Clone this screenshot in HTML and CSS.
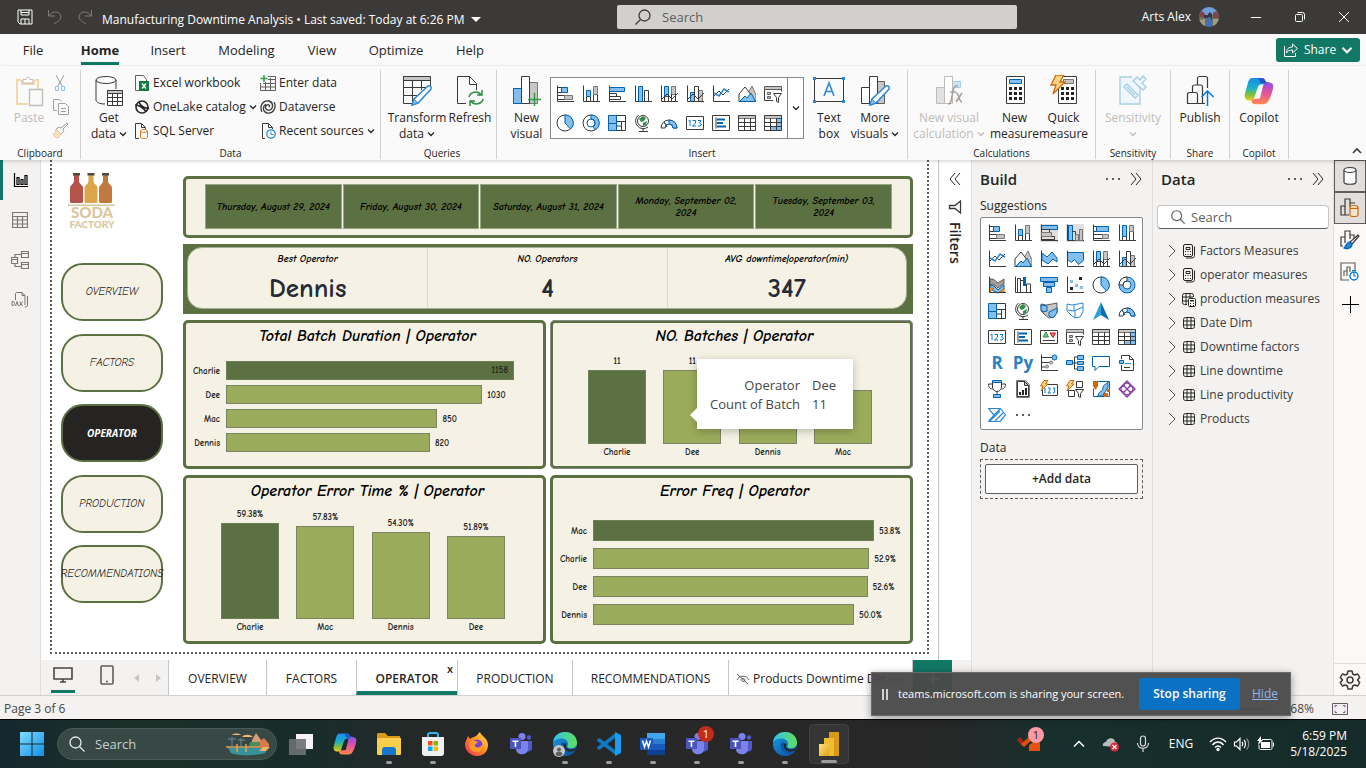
FILE: index.html
```html
<!DOCTYPE html>
<html lang="en">
<head>
<meta charset="utf-8">
<title>Manufacturing Downtime Analysis</title>
<link rel="stylesheet" href="styles.css">
</head>
<body>
<svg class="sprite" aria-hidden="true">
  <defs>
    <linearGradient id="cpA" x1="0" y1="0" x2="0" y2="1"><stop offset="0" stop-color="#1d8be8"/><stop offset=".45" stop-color="#18b2c9"/><stop offset=".7" stop-color="#6ac04a"/><stop offset="1" stop-color="#f4c51c"/></linearGradient>
    <linearGradient id="cpB" x1="0" y1="0" x2="0" y2="1"><stop offset="0" stop-color="#8a4fe8"/><stop offset=".5" stop-color="#e2519f"/><stop offset="1" stop-color="#ff8a4a"/></linearGradient>
    <linearGradient id="edgeA" x1="0" y1="0" x2="1" y2="0"><stop offset="0" stop-color="#35c1f1"/><stop offset="1" stop-color="#5fe05a"/></linearGradient>
    <linearGradient id="edgeB" x1="0" y1="0" x2="1" y2="1"><stop offset="0" stop-color="#1b9de2"/><stop offset="1" stop-color="#0c4a9e"/></linearGradient>
    <linearGradient id="fox" x1="1" y1="0" x2="0" y2="1"><stop offset="0" stop-color="#ffe34a"/><stop offset=".5" stop-color="#ff8a1e"/><stop offset="1" stop-color="#f0255f"/></linearGradient>
    <linearGradient id="win" x1="0" y1="0" x2="1" y2="1"><stop offset="0" stop-color="#7fdcff"/><stop offset="1" stop-color="#0f8fe8"/></linearGradient>
    <linearGradient id="gold" x1="0" y1="0" x2="1" y2="1"><stop offset="0" stop-color="#ffe27a"/><stop offset="1" stop-color="#e0a01a"/></linearGradient>
  </defs>
  <symbol id="v-stackbar" viewBox="0 0 18 18"><path class="k" d="M1.500 .5V16.500H18M1.500 2.500h4v5h-4M1.500 10.500h7v4h-7"/><path class="b" d="M5.500 2.500h6v5h-6z"/><path class="g" d="M8.500 10.500h8v4h-8z"/></symbol>
  <symbol id="v-stackcol" viewBox="0 0 18 18"><path class="k" d="M1.500 .5V16.500H18M4.500 16V11.500h4V16M11.500 16V9.500h4V16"/><path class="b" d="M4.500 5.500h4v6h-4z"/><path class="g" d="M11.500 1.500h4v8h-4z"/></symbol>
  <symbol id="v-bar" viewBox="0 0 18 18"><path class="k" d="M1.500 .5V16.500H18M1.500 8.500h7v3h-7M1.500 11.500h11v3h-11"/><path class="b" d="M1.500 2.500h15v4h-15z"/></symbol>
  <symbol id="v-col" viewBox="0 0 18 18"><path class="k" d="M1.500 .5V16.500H18M10.500 16V5.500h4V16"/><path class="b" d="M4.500 1.500h4v15h-4z"/></symbol>
  <symbol id="v-clbar" viewBox="0 0 18 18"><path class="b" d="M1.500 1.500h16v4h-16z"/><path class="k" d="M1.500 .5V16.500H18M1.500 5.500h8v3h-8M1.500 12.500h13v3h-13"/><path class="g" d="M1.500 8.500h10v4h-10z"/></symbol>
  <symbol id="v-clcol" viewBox="0 0 18 18"><path class="b" d="M2.500 1.500h4v15h-4z"/><path class="k" d="M1.500 .5V16.500H18M6.500 7.500h3V16"/><path class="g" d="M9.500 10.500h3v6h-3zM13.500 5.500h3v11h-3z"/></symbol>
  <symbol id="v-100bar" viewBox="0 0 18 18"><path class="k" d="M1.500 .5V16.500H18M1.500 2.500h3v5h-3M1.500 10.500h9v4h-9"/><path class="b" d="M4.500 2.500h12v5h-12z"/><path class="g" d="M10.500 10.500h6v4h-6z"/></symbol>
  <symbol id="v-100col" viewBox="0 0 18 18"><path class="k" d="M1.500 .5V16.500H18M4.500 16V12.500h4V16M11.500 16V7.500h4V16"/><path class="b" d="M4.500 1.500h4v11h-4z"/><path class="g" d="M11.500 1.500h4v6h-4z"/></symbol>
  <symbol id="v-line" viewBox="0 0 18 18"><path class="k" d="M1.500 .5V16.500H18M2 11l5-5 4 4 6-6"/><path d="M2 8l5 3 5-7 5 3" fill="none" stroke="#2b88d8" stroke-width="1.500"/></symbol>
  <symbol id="v-area" viewBox="0 0 18 18"><path class="g" d="M10 8l4-7 4 9v7z"/><path class="k" fill="#fff" d="M1 16V9l6-7 7 9M.5 16.500H18"/><path class="b" d="M1.500 16.500L7 11l2 2 4-5 4.500 8.500z"/></symbol>
  <symbol id="v-starea" viewBox="0 0 18 18"><path class="b" d="M2 3l5 4 5-5 5 6v4l-4-3-5 5-6-4z"/><path class="k" d="M1.500 .5V16.500H18"/></symbol>
  <symbol id="v-fullarea" viewBox="0 0 18 18"><path class="b" d="M1.500 2.500h16v8l-5 4-4-5-3 3-4-3z"/><path class="k" d="M1.500 .5V16.500H18"/></symbol>
  <symbol id="v-combo" viewBox="0 0 18 18"><path class="b" d="M4.500 1.500h4v10h-4z"/><path class="g" d="M11.500 1.500h4v8h-4z"/><path class="k" d="M1.500 .5V16.500H18M4.500 16v-5M8.500 16v-5M11.500 16V9M15.500 16V9M2 14l5-5 5 5 6-6"/></symbol>
  <symbol id="v-combo2" viewBox="0 0 18 18"><path class="b" d="M4.500 7.500h4v9h-4z"/><path class="g" d="M12.500 5.500h4v11h-4z"/><path class="k" d="M1.500 .5V16.500H18M8.500 16V1.500h4V16M2 14l5-5 5 5 6-6"/></symbol>
  <symbol id="v-ribbon" viewBox="0 0 18 18"><path d="M2 3h3l5 4 6-4v5l-6 4-5-4-3 1z" fill="#a19f9d" stroke="#605e5c"/><path d="M2 9l4 1 4 4 6-5v4l-6 4-8-4z" fill="#83beec" stroke="#0063b1"/><path d="M2 12h4l-4 4M16 12l-4 4h4z" fill="#f2a33a" stroke="#d26900"/><path class="k" d="M1.500 .5V16.500H18"/></symbol>
  <symbol id="v-waterfall" viewBox="0 0 18 18"><path class="k" d="M1.500 .5V16.500H18M3.500 16V2.500h3V16M6.500 4.500h3v5M12.500 16v-8h4v8"/><path d="M10.500 1v9" stroke="#0063b1" stroke-width="3"/></symbol>
  <symbol id="v-funnel" viewBox="0 0 18 18"><path class="b" d="M.5 1.500h17v4H.5zM3.500 6.500h11v4h-11zM6.500 11.500h5v5h-5z"/></symbol>
  <symbol id="v-scatter" viewBox="0 0 18 18"><path class="k" d="M1.500 .5V16.500H18"/><path fill="#83beec" d="M4 4h3v3H4zM9 8h3v3H9zM14 10h3v3h-3z"/><path fill="#252423" d="M13 1h3v3h-3zM4 11h3v3H4z"/></symbol>
  <symbol id="v-pie" viewBox="0 0 18 18"><circle class="k" cx="9" cy="9" r="8"/><path class="b" d="M9 1v8l5.500 6A8 8 0 0 0 9 1z"/></symbol>
  <symbol id="v-donut" viewBox="0 0 18 18"><circle class="k" cx="9" cy="9" r="8"/><path class="b" d="M9 1v4a4 4 0 0 1 2 7.500l2 3.500A8 8 0 0 0 9 1z"/><circle cx="9" cy="9" r="4" fill="none" stroke="#0063b1"/></symbol>
  <symbol id="v-donut2" viewBox="0 0 18 18"><circle class="b" cx="9" cy="9" r="8"/><circle cx="9" cy="9" r="4" fill="#fff" stroke="#0063b1"/><path class="k" fill="#fff" d="M9 1A8 8 0 0 0 1 9h4a4 4 0 0 1 4-4z"/></symbol>
  <symbol id="v-tree" viewBox="0 0 18 18"><path class="k" d="M8.500 1.500h9v15h-9zM8.500 7.500h9M13.500 7.500v9M8.500 12h5"/><path class="b" d="M.5 1.500h8v8h-8zM.5 9.500h8v7h-8z"/></symbol>
  <symbol id="v-globe" viewBox="0 0 18 18"><circle class="k" cx="9" cy="7" r="5.500"/><path d="M5 5l4-3 3 2-2 3-3 1zM9 9l4-2-1 4-3 1z" fill="#2f8f46"/><path class="k" d="M4.500 1A7.500 7.500 0 1 0 14 13M9 14v3M5 17.500h9"/></symbol>
  <symbol id="v-map" viewBox="0 0 18 18"><path d="M1 2l5 1 6-1 5-1v9l-3 5-5 1-4-3-4-4z" fill="#c8c6c4" stroke="#605e5c"/><path class="b" d="M1 3l6 1v5l-4 1-2-3zM9 10l8-4v5l-4 5-4-2z"/></symbol>
  <symbol id="v-shape" viewBox="0 0 18 18"><path fill="#fff" stroke="#2b88d8" d="M1 2l5 1 6-1 5-1v9l-3 5-5 1-4-3-4-4zM2 8l6 1 9-4M9 9v7M8 3v6"/></symbol>
  <symbol id="v-arrow" viewBox="0 0 18 18"><path fill="#2aa2d8" d="M9 0L1 18l8-5z"/><path fill="#0e6cb0" d="M9 0l8 18-8-5z"/></symbol>
  <symbol id="v-gauge" viewBox="0 0 18 18"><path class="k" fill="#fff" d="M1 14a8 8 0 0 1 8-8 8 8 0 0 1 8 8h-4a4 4 0 0 0-8 0z"/><path class="b" d="M9 6a8 8 0 0 1 8 8h-4a4 4 0 0 0-4-4zM7 13l-3-5z"/></symbol>
  <symbol id="v-card" viewBox="0 0 18 18"><path class="k" fill="#fff" d="M.5 2.500h17v13H.5z"/><path fill="none" stroke="#0078d4" d="M2.500 7L4 6v6M6.500 6.500h3V9l-3 3h3.500M12 6.500h3l-1.500 2.500 2 1.500L14 12h-2"/></symbol>
  <symbol id="v-multirow" viewBox="0 0 18 18"><path class="k" fill="#fff" d="M.5 1.500h17v15H.5zM4 3.500v11"/><path stroke="#0063b1" stroke-width="2" d="M5 5.500h8M5 9h6M5 12.500h9"/></symbol>
  <symbol id="v-kpi" viewBox="0 0 18 18"><path class="k" fill="#fff" d="M.5 2.500h17v13H.5z"/><path fill="#7bc58c" stroke="#2f8f46" d="M3 9l3-5 2.500 5z"/><path fill="#e87474" stroke="#c50f1f" d="M10 5h5.500L13 9.500z"/><path class="k" d="M3 12.500h12"/></symbol>
  <symbol id="v-slicer" viewBox="0 0 18 18"><path class="k" d="M9 15.500H.5v-13h17v4"/><path fill="#c8c6c4" stroke="#605e5c" d="M.5 1.500h17v3H.5zM3.500 7.500h3v2h-3zM3.500 11.500h3v2h-3z"/><path class="k" fill="#fff" d="M9.500 8.500h8l-3 4v5l-2-1v-4z"/></symbol>
  <symbol id="v-table" viewBox="0 0 18 18"><path class="g" d="M.5 1.500h17v3H.5z"/><path class="k" d="M.5 1.500h17v15H.5zM.5 8.500h17M.5 12.500h17M6.500 4v12M12.500 4v12"/></symbol>
  <symbol id="v-matrix" viewBox="0 0 18 18"><path class="g" d="M.5 1.500h17v3H.5z"/><path class="b" d="M12.500 4.500h5v12h-11v-4h6z"/><path class="k" d="M.5 1.500h17v15H.5zM.5 8.500h17M.5 12.500h17M6.500 4v12M12.500 4v12"/></symbol>
  <symbol id="v-influ" viewBox="0 0 18 18"><path class="k" d="M1.500 .5V16.500H18M1.500 3.500H13M1.500 8.500h8M1.500 13h4"/><circle class="b" cx="14.500" cy="3.500" r="2.500"/><circle class="g" cx="11" cy="8.500" r="1.500"/><circle class="g" cx="7" cy="12.500" r="1.500"/></symbol>
  <symbol id="v-decomp" viewBox="0 0 18 18"><path class="k" d="M6 9h5M8.500 3v12M8.500 3h3M8.500 15h3"/><path class="b" d="M.5 6.500h6v4h-6zM11.500 1.500h6v4h-6zM11.500 7.500h6v3h-6zM11.500 12.500h6v4h-6z"/></symbol>
  <symbol id="v-qa" viewBox="0 0 18 18"><path fill="#fff" stroke="#0063b1" d="M.5 2.500h17v10H7l-4 4v-4H.5z"/></symbol>
  <symbol id="v-paper" viewBox="0 0 18 18"><path class="k" d="M3.500 5V1.500h8l4 4v11h-12V11M11.500 1.500v4h4M6 13.500h6"/><path class="b" d="M1.500 6.500h4v3h-4z"/><path stroke="#2b88d8" d="M7 9.500h6"/></symbol>
  <symbol id="v-goal" viewBox="0 0 18 18"><path class="k" d="M4.500 2v5a4.500 4.500 0 0 0 9 0V2M4 4H.5c0 4 2 5 4 5M14 4h3.500c0 4-2 5-4 5M9 11.500V15"/><path class="b" d="M4.500 .5h9v2h-9zM5.500 14.500h7v3h-7z"/></symbol>
  <symbol id="v-paged" viewBox="0 0 18 18"><path class="g" d="M2.500 .5h9l4 4v13h-13z"/><path class="k" fill="#fff" d="M3.500 1.500h7l4 4v11h-11zM10.500 1.500v4h4"/><path stroke="#252423" stroke-width="2" d="M6 15v-3M9 15v-5M12 15V8"/></symbol>
  <symbol id="v-cardnew" viewBox="0 0 18 18"><path class="k" fill="#fff" d="M2.500 4.500h15v11h-15z"/><path fill="none" stroke="#0078d4" d="M5 8v5M8 8h2v2l-2 3h3M13 8h2l-1 2 1 1-1 2h-1"/><path fill="#fbd38a" stroke="#d26900" d="M4 .5h4L5.500 4H8l-7 7 2-5H.5z"/></symbol>
  <symbol id="v-slicernew" viewBox="0 0 18 18"><path class="k" d="M10.500 1.500h6v6h-6zM2.500 10.500h6v6h-6z"/><path class="k" fill="#fff" d="M9.500 9.500h8l-3 4v4l-2-1v-3z"/><path fill="#fbd38a" stroke="#d26900" d="M4 .5h4L5.500 4H8l-7 7 2-5H.5z"/></symbol>
  <symbol id="v-azure" viewBox="0 0 18 18"><path class="b" fill="#fff" d="M3.500 1.500h14v15h-16v-8"/><path fill="#83beec" stroke="#0063b1" d="M6 16c0-5 5-4 5-8s3-3 5-6v6c-3 1-1 4-4 5l-1 3z"/><path fill="#d26900" d="M1 1h5v5L3.500 10 1 6zM12 13h4v4h-4zM15 9h3v3h-3z"/></symbol>
  <symbol id="v-apps" viewBox="0 0 18 18"><g fill="#fff" stroke="#8b3fa8" stroke-width="1.300"><path d="M9 1l8 8-8 8-8-8z"/><path d="M9 9L6 6a2.500 2.500 0 0 1 6 0zM9 9l3 3a2.500 2.500 0 0 1-6 0zM9 9l-3 3a2.500 2.500 0 0 1 0-6zM9 9l3-3a2.500 2.500 0 0 1 0 6z"/></g></symbol>
  <symbol id="v-flow" viewBox="0 0 18 18"><path fill="#fff" stroke="#2b88d8" stroke-width="1.200" d="M.5 2.500h12L17.500 9 12 15.500H.5L6 9zM6 9l6-6M2 15L12 5M7 15l8-8"/></symbol>
  <symbol id="v-dots" viewBox="0 0 18 18"><path fill="#605e5c" d="M2 8h2v2H2zM8 8h2v2H8zM14 8h2v2h-2z"/></symbol>
  <symbol id="i-down" viewBox="0 0 8 8"><path fill="none" stroke="currentColor" stroke-width="1.300" d="M1 2.500l3 3 3-3"/></symbol>
  <symbol id="i-right2" viewBox="0 0 14 14"><path fill="none" stroke="currentColor" d="M2 1l5 6-5 6M7 1l5 6-5 6"/></symbol>
  <symbol id="i-right" viewBox="0 0 14 14"><path fill="none" stroke="currentColor" d="M4 1l6 6-6 6"/></symbol>
  <symbol id="i-search" viewBox="0 0 18 18"><circle cx="10.500" cy="7.500" r="5.500" fill="none" stroke="currentColor" stroke-width="1.300"/><path stroke="currentColor" stroke-width="1.300" d="M6.500 11.500L1.500 16.500"/></symbol>
  <symbol id="i-search-r" viewBox="0 0 18 18"><circle cx="7.500" cy="7.500" r="5.500" fill="none" stroke="currentColor" stroke-width="1.300"/><path stroke="currentColor" stroke-width="1.300" d="M11.500 11.500l5 5"/></symbol>
  <symbol id="i-calc" viewBox="0 0 14 16"><rect x="1.500" y="1.500" width="9" height="12" rx="1.500" fill="none" stroke="#252423"/><path fill="none" stroke="#252423" d="M12.500 3.500v9c0 1.500-1 2.500-2.500 2.500H4M4 4.500h4v2H4z"/><path fill="#252423" d="M3 8h1v1H3zM5.500 8h1v1h-1zM8 8h1v1H8zM3 11h1v1H3zM5.500 11h1v1h-1zM8 11h1v1H8z"/></symbol>
  <symbol id="i-tbl" viewBox="0 0 14 16"><rect x="1.500" y="2.500" width="11" height="11" rx="2" fill="none" stroke="#252423"/><path stroke="#252423" d="M1 6h12M1 10h12M5 3v11M9 3v11"/></symbol>
  <symbol id="i-tblcalc" viewBox="0 0 16 16"><path fill="none" stroke="#252423" d="M6 13.500H3.500a2 2 0 0 1-2-2v-7a2 2 0 0 1 2-2h7a2 2 0 0 1 2 2V6M1 6h11M1 10h6M5 3v10M9 3v4"/><rect x="7.500" y="7.500" width="7" height="8" rx="1" fill="#fff" stroke="#252423"/><path fill="#252423" d="M9 9h4v1.500H9zM9 12h1v1H9zM12 12h1v1h-1zM9 14h1v1H9zM12 14h1v1h-1z"/></symbol>
  <symbol id="i-copilot" viewBox="0 0 32 32"><path fill="url(#cpB)" d="M23 6c3 0 5 1 7 2 2 2 1 5 0 9l-2 6c-2 4-3 7-8 7h-8c-3 0-4-2-4-5l9-1 3-12c1-4 1-6 3-6z"/><path fill="url(#cpA)" d="M9 2h9c3 0 4 2 5 6l-5 1c-2 0-3 2-4 5l-3 9c0 2-2 3-4 3H4c-3-1-4-4-3-7L4 8c1-4 2-6 5-6z"/><path fill="#2458c8" d="M14 2h5c3 0 4 2 5 6h-5c-3-1-2-5-5-6z"/></symbol>
  <symbol id="i-teams" viewBox="0 0 24 24"><circle cx="13" cy="4.500" r="3.500" fill="#7b83eb"/><circle cx="20" cy="5.500" r="2.200" fill="#5059c9"/><path fill="#5059c9" d="M15 9h8v7c0 3-3 4-6 3z"/><path fill="#7b83eb" d="M7 9h12v8c0 7-12 7-12 0z"/><path fill="#4b53bc" d="M1 6h11v11H1z"/><path fill="#fff" d="M3.500 8.500h6V10H7.300v5H5.700v-5H3.500z"/></symbol>
  <symbol id="i-edge" viewBox="0 0 24 24"><circle cx="12" cy="12" r="12" fill="url(#edgeB)"/><path fill="url(#edgeA)" d="M0 10C2-4 24-3 24 11c0 4-4 6-8 5-3-1-1-2-1-4 0-7-12-7-15-2z"/><path fill="#0c59a4" d="M9 10c-3 4 0 12 8 12 2 0 4-1 5-3-4 2-9 1-11-2-1-2-1-4-.5-6z"/><path fill="#242626" d="M10.500 11c2 0 3 1 2.500 3-.5 1.500 2 4 6 3.500l4-1-1 2c-6 3-12 0-11.500-7.500z"/></symbol>
</svg>

<header class="titlebar">
  <div class="quick">
    <button aria-label="Save"><svg width="16" height="16" viewBox="0 0 16 16" fill="none" stroke="#fff"><path d="M1 1h14v14H3l-2-2zM4 1v5h8V1M4 15v-5h8v5M8 10v5M4 3.500h8"/></svg></button>
    <button aria-label="Undo"><svg width="16" height="16" viewBox="0 0 16 16" fill="none" stroke="#7d7b79"><path d="M1.500 1v6H8M2 7c3-6 12-5 12 1 0 3-4 5-7 7"/></svg></button>
    <button aria-label="Redo"><svg width="16" height="16" viewBox="0 0 16 16" fill="none" stroke="#7d7b79"><path d="M14.500 1v6H8M14 7C11 1 2 2 2 8c0 3 4 5 7 7"/></svg></button>
  </div>
  <button class="doc">Manufacturing Downtime Analysis • Last saved: Today at 6:26 PM <i class="caret"></i></button>
  <label class="topsearch"><svg width="18" height="18"><use href="#i-search"/></svg><input type="text" placeholder="Search" aria-label="Search"></label>
  <div class="account"><span>Arts Alex</span>
    <svg class="avatar" width="20" height="20" viewBox="0 0 20 20"><clipPath id="av"><circle cx="10" cy="10" r="10"/></clipPath><g clip-path="url(#av)"><path fill="#6f9ddc" d="M0 0h20v8H0z"/><path fill="#6d7058" d="M0 8h20v12H0z"/><path fill="#84424a" d="M0 6l3-2 3 3v3H0zM14 6l3-2 3 2v5h-6z"/><path fill="#343a42" d="M5 8h4v3H5zM9 7l2-2 2 2v6H9z"/><path fill="#3f6fc0" d="M8 11l3-1 2 3v7H7z"/><path fill="#9d9c85" d="M0 13l6-1v8H0zM14 12h6v8h-6z"/></g></svg>
    <button aria-label="Minimize"><svg width="12" height="12" viewBox="0 0 12 12" stroke="#fff"><path d="M1 6.500h10"/></svg></button>
    <button aria-label="Restore"><svg width="12" height="12" viewBox="0 0 12 12" stroke="#fff" fill="none"><rect x="1.500" y="3.500" width="7" height="7" rx="1"/><path d="M3.500 1.500h5a2 2 0 0 1 2 2v5"/></svg></button>
    <button aria-label="Close"><svg width="12" height="12" viewBox="0 0 12 12" stroke="#fff"><path d="M1 1l10 10M11 1L1 11"/></svg></button>
  </div>
</header>

<nav class="menu">
  <button>File</button><button class="on">Home</button><button>Insert</button><button>Modeling</button><button>View</button><button>Optimize</button><button>Help</button>
  <button class="share"><svg width="16" height="16" viewBox="0 0 16 16" fill="none" stroke="#fff"><path d="M1.500 4v10.500h11V11M3.500 11c0-4 2-6 6-6V2l5 4.500-5 4.500V8c-3 0-5 1-6 3z"/></svg>Share<svg width="12" height="12"><use href="#i-down"/></svg></button>
</nav>

<section class="ribbon" aria-label="Home ribbon">
  <div class="group clip"><div class="tools">
    <button class="big off"><svg width="30" height="32" viewBox="0 0 30 32" fill="none"><path stroke="#f3d7a8" stroke-width="2" d="M7 5H3v24h11M21 5h3v9M8 5v4h12V5"/><path stroke="#bebbb8" d="M9 8V4.500h3c0-3 4-3 4 0h3V8z" fill="#fff"/><path stroke="#bebbb8" stroke-width="1.300" d="M15.500 14.500h13v16h-13z" fill="#fafafa"/></svg><span>Paste</span></button>
    <div class="stack tiny">
      <button aria-label="Cut"><svg width="16" height="16" viewBox="0 0 16 16" fill="none" stroke="#a3a09e"><path d="M4 0l6 11M12 0L6 11"/><g stroke="#8fc1df"><path d="M3.500 11.500h3v4h-3zM9.500 11.500h3v4h-3z"/></g></svg></button>
      <button aria-label="Copy"><svg width="18" height="16" viewBox="0 0 18 16" fill="none" stroke="#a3a09e"><path d="M5 11.500H1.500V.5h6l2 2M6.500 4.500h7l3 3v8h-10zM9 9.500h5M9 12.500h5"/></svg></button>
      <button aria-label="Format painter"><svg width="18" height="16" viewBox="0 0 18 16" fill="none"><path stroke="#a3a09e" fill="#fafafa" d="M16 1l-5 5 1 2-3 3-5-5 3-2 2 1 6-5z"/><path fill="#fbe3c0" stroke="#efbf8a" d="M4 6l5 5-3 4c-2 0-4-2-5-4 2 0 3-2 3-5z"/></svg></button>
    </div></div><h2>Clipboard</h2></div>
  <div class="group data"><div class="tools">
    <button class="big"><svg width="30" height="32" viewBox="0 0 30 32" fill="none" stroke="#3b3a39"><ellipse cx="12" cy="5" rx="10" ry="3.500" fill="#fff"/><path d="M2 5v20c0 2 3 4 9 4M22 5v9"/><path fill="#fff" d="M13.500 15.500h15v15h-15z"/><path fill="#c8c6c4" d="M13.500 15.500h15v3h-15z"/><path d="M13.500 22.500h15M13.500 26.500h15M18.500 18v12M23.500 18v12"/></svg><span>Get<br>data <svg class="dn"><use href="#i-down"/></svg></span></button>
    <div class="stack">
      <button><svg width="16" height="16" viewBox="0 0 16 16" fill="none" stroke="#605e5c"><path d="M5 15.500H1.500V.5h8l3 4V7"/><path fill="#107c41" stroke="none" d="M5 6h10v10H5z"/><path stroke="#fff" stroke-width="1.400" d="M8 8.500l4 5M12 8.500l-4 5"/></svg>Excel workbook</button>
      <button><svg width="16" height="16" viewBox="0 0 16 16" fill="none" stroke="#252423" stroke-width="1.600"><circle cx="8" cy="8" r="6"/><path d="M1 6c4 0 9 3 11 7M5 3c1 3 5 7 10 6"/></svg>OneLake catalog<svg class="dn"><use href="#i-down"/></svg></button>
      <button><svg width="16" height="16" viewBox="0 0 16 16" fill="none" stroke="#3b3a39"><path d="M5 15.500H1.500V.5h6l4 4V6M7.500 .5v4h4"/><path fill="#fff" stroke="#e07a1f" d="M6.500 8v6c0 2 7 2 7 0V8c0-2-7-2-7 0s7 2 7 0"/></svg>SQL Server</button>
    </div>
    <div class="stack">
      <button><svg width="16" height="16" viewBox="0 0 16 16" fill="none" stroke="#605e5c"><path d="M8 1.500h7.500v14H.5V8M3 8.500h12M.5 12h15M5.500 7v8M10.500 3v12M8 4.500h7"/><path stroke="#2f9e44" stroke-width="1.500" d="M4 0v7M.5 3.500h7"/></svg>Enter data</button>
      <button><svg width="16" height="16" viewBox="0 0 16 16" fill="none" stroke="#3b3a39" stroke-width="1.300"><path d="M2 13C-1 7 3 1 9 2c4 1 5 7 1 9-4 1-6-3-3-5 2-1 3 1 2 2M14 3c3 6-1 12-7 11C3 13 2 8 6 5"/></svg>Dataverse</button>
      <button><svg width="16" height="16" viewBox="0 0 16 16" fill="none" stroke="#3b3a39"><path d="M5 15.500H2.500V.5h6l4 4V6M8.500 .5v4h4"/><circle cx="11" cy="11" r="4.200" stroke="#2b88d8" stroke-width="1.300" fill="#fff"/><path stroke="#2b88d8" d="M11 8.500v3h2.500"/></svg>Recent sources<svg class="dn"><use href="#i-down"/></svg></button>
    </div></div><h2>Data</h2></div>
  <div class="group quer"><div class="tools">
    <button class="big"><svg width="32" height="32" viewBox="0 0 32 32" fill="none" stroke="#3b3a39"><path d="M11 28.500H2.500v-27h27V14M2.500 12.500h24M2.500 20.500h14M11.500 5v23M20.500 5v10"/><path fill="#c8c6c4" d="M2.500 1.500h27v4h-27z"/><path fill="#fff" stroke="#2b88d8" stroke-width="1.500" d="M27 11c2-1 4 1 3 3L17 28l-6 2 2-6z"/><path fill="#83beec" stroke="#2b88d8" d="M13 24l4 4-6 2z"/></svg><span>Transform<br>data <svg class="dn"><use href="#i-down"/></svg></span></button>
    <button class="big"><svg width="30" height="32" viewBox="0 0 30 32" fill="none" stroke="#3b3a39"><path d="M11 28.500H2.500v-27h12l7 7V15M14.500 1.500v8h7"/><path stroke="#2f8f46" stroke-width="1.500" d="M14 22c1-5 9-7 12-2M27 15v5h-5M28 24c-1 5-9 7-12 2M15 31v-5h5"/></svg><span>Refresh</span></button>
  </div><h2>Queries</h2></div>
  <div class="group ins"><div class="tools">
    <button class="big"><svg width="32" height="32" viewBox="0 0 32 32"><path class="b" d="M2.500 13.500h8v15h-8z"/><path class="g" d="M18.500 7.500h8v21h-8z"/><path fill="#fff" stroke="#3b3a39" d="M10.500 1.500h8v27h-8z"/><path stroke="#2f9e44" stroke-width="1.500" d="M23.500 18v13M17 24.500h13"/></svg><span>New<br>visual</span></button>
    <div class="gallery">
      <div class="cells">
        <button><svg><use href="#v-stackbar"/></svg></button><button><svg><use href="#v-stackcol"/></svg></button><button><svg><use href="#v-bar"/></svg></button><button><svg><use href="#v-col"/></svg></button><button><svg><use href="#v-combo"/></svg></button><button><svg><use href="#v-combo2"/></svg></button><button><svg><use href="#v-line"/></svg></button><button><svg><use href="#v-area"/></svg></button><button><svg><use href="#v-slicer"/></svg></button>
        <button><svg><use href="#v-pie"/></svg></button><button><svg><use href="#v-donut"/></svg></button><button><svg><use href="#v-tree"/></svg></button><button><svg><use href="#v-globe"/></svg></button><button><svg><use href="#v-gauge"/></svg></button><button><svg><use href="#v-card"/></svg></button><button><svg><use href="#v-multirow"/></svg></button><button><svg><use href="#v-table"/></svg></button><button><svg><use href="#v-matrix"/></svg></button>
      </div>
      <button class="drop" aria-label="More"><svg class="dn"><use href="#i-down"/></svg></button>
    </div>
    <button class="big"><svg width="32" height="32" viewBox="0 0 32 32" fill="none"><path stroke="#3b3a39" d="M1.500 3.500h29v23h-29z"/><path fill="#2b88d8" d="M0 2h3v3H0zM29 2h3v3h-3zM0 25h3v3H0zM29 25h3v3h-3z"/><path stroke="#2b88d8" stroke-width="1.600" d="M11 21l5-13 5 13M13 16.500h6"/></svg><span>Text<br>box</span></button>
    <button class="big"><svg width="32" height="32" viewBox="0 0 32 32"><path fill="#c8c6c4" stroke="#605e5c" d="M18.500 6.500h7v22h-7z"/><path fill="#fff" stroke="#3b3a39" d="M2.500 12.500h8v16h-8zM10.500 1.500h8v27h-8z"/><path fill="#fff" stroke="#2b88d8" stroke-width="1.500" d="M27 11c2-1 4 1 3 3L17 28l-6 2 2-6z"/><path fill="#83beec" stroke="#2b88d8" d="M13 24l4 4-6 2z"/></svg><span>More<br>visuals <svg class="dn"><use href="#i-down"/></svg></span></button>
  </div><h2>Insert</h2></div>
  <div class="group calc"><div class="tools">
    <button class="big off"><svg width="32" height="32" viewBox="0 0 32 32" fill="none"><path fill="#e4e2e0" stroke="#bebbb8" d="M3.500 12.500h8v16h-8z"/><path fill="#cfe4f6" stroke="#a5cce8" d="M19.500 6.500h8v6h-8z"/><path fill="#fff" stroke="#bebbb8" d="M11.500 1.500h8v27h-8z"/><path stroke="#a3a09e" stroke-width="1.500" d="M25 11c-3-1-4 1-5 5l-2 10c-.5 2-1 3-3 3M17 17h6M23 18c3 0 3 9 6 9M29 18l-6 9"/></svg><span>New visual<br>calculation <svg class="dn"><use href="#i-down"/></svg></span></button>
    <button class="big"><svg width="24" height="32" viewBox="0 0 24 32"><path fill="#fff" stroke="#3b3a39" d="M3.500 1.500h18v27h-18z"/><path class="b" d="M6.500 4.500h12v4h-12z"/><path stroke="#252423" stroke-width="3" stroke-dasharray="3 2" d="M6 13.500h13M6 18.500h13M6 23.500h13"/></svg><span>New<br>measure</span></button>
    <button class="big"><svg width="28" height="32" viewBox="0 0 28 32"><path fill="#fff" stroke="#3b3a39" d="M8.500 1.500h18v27h-18z"/><path class="g" d="M13.500 4.500h10v4h-10z"/><path stroke="#252423" stroke-width="3" stroke-dasharray="3 2" d="M11 13.500h13M11 18.500h13M11 23.500h13"/><path fill="#fbd38a" stroke="#d26900" stroke-width="1.300" d="M6 0h8l-4 7h5L3 19l3-9H1z"/></svg><span>Quick<br>measure</span></button>
  </div><h2>Calculations</h2></div>
  <div class="group sens"><div class="tools">
    <button class="big off"><svg width="30" height="32" viewBox="0 0 30 32" fill="#eef6fb" stroke="#a5cfe3" stroke-width="1.300"><path d="M22 12v17H2V2h12"/><path d="M6 12l3-3 11 11-3 3zM9 12l8 8M15 6l4-4 3 3 3-4 3 3-4 4 4 4-3 3z"/></svg><span>Sensitivity<br><svg class="dn"><use href="#i-down"/></svg></span></button>
  </div><h2>Sensitivity</h2></div>
  <div class="group pub"><div class="tools">
    <button class="big"><svg width="30" height="32" viewBox="0 0 30 32" fill="none" stroke="#3b3a39" stroke-width="1.200"><path d="M2.500 28.500v-9a2 2 0 0 1 2-2h6a2 2 0 0 1 2 2v9zM7.500 17v-5a2 2 0 0 1 2-2h6a2 2 0 0 1 2 2v16.500M12.500 10V3.500a2 2 0 0 1 2-2h6a2 2 0 0 1 2 2V13M12 28.500h8"/><path stroke="#0078d4" stroke-width="1.500" d="M22.500 31V16M16.500 22l6-6 6 6"/></svg><span>Publish</span></button>
  </div><h2>Share</h2></div>
  <div class="group pub"><div class="tools">
    <button class="big"><svg width="30" height="30"><use href="#i-copilot"/></svg><span>Copilot</span></button>
  </div><h2>Copilot</h2></div>
  <button class="fold" aria-label="Collapse ribbon"><svg width="10" height="8" viewBox="0 0 10 8"><path fill="none" stroke="#3b3a39" stroke-width="1.600" d="M1 6l4-4 4 4"/></svg></button>
</section>

<main class="work">
  <nav class="rail">
    <button class="on" aria-label="Report view"><svg width="16" height="16" viewBox="0 0 16 16" fill="none" stroke="#000" stroke-width="1.200"><path d="M1.500 1v13.500H15M4 5.500h2v7H4zM8 7.500h2v5H8zM12 3.500h2v9h-2z"/></svg></button>
    <button aria-label="Table view"><svg width="16" height="16" viewBox="0 0 16 16" fill="none" stroke="#797775" stroke-width="1.200"><path d="M.5 .5h15v15H.5zM.5 4.500h15M.5 8h15M.5 12h15M5.500 4v11M10.500 4v11"/></svg></button>
    <button aria-label="Model view"><svg width="18" height="18" viewBox="0 0 18 18" fill="none" stroke="#797775" stroke-width="1.200"><path d="M.5 6.500h6v6h-6zM10.500 .5h7v6h-7zM10.500 11.500h7v6h-7zM.5 8.500h6M10.500 2.500h7M10.500 13.500h7M4 6V3.500h6M4 13v2.500h6"/></svg></button>
    <button aria-label="DAX query view"><svg width="18" height="18" viewBox="0 0 18 18" fill="none" stroke="#797775"><path d="M4.500 9V3c0-1 .5-1.500 1.500-1.500h5l3 3V14M11 1.500v3h3M16.500 5v9c0 1.500-1 2-2.500 2"/><path d="M1 10.500v4h1c2 0 2-4 0-4zM4.500 15l1.500-4.500L7.500 15M8.500 10.500l3 4.500M11.500 10.500l-3 4.500"/></svg></button>
  </nav>

  <div class="center">
    <div class="stage">
      <div class="canvas">
        <article class="page">
          <aside class="side">
            <svg class="logo" width="48" height="58" viewBox="0 0 48 58" role="img" aria-label="Soda Factory">
              <path fill="#b5524a" d="M6 3h5v6c0 3 4 4 4 7v13c0 2-1 2-2 2H4c-1 0-2 0-2-2V16c0-3 4-4 4-7z"/><path fill="#4d4a45" d="M5 1h7v2.500H5z"/>
              <path fill="#dca54c" d="M20.500 3h5v6c0 3 4 4 4 7v13c0 2-1 2-2 2h-9c-1 0-2 0-2-2V16c0-3 4-4 4-7z"/><path fill="#4d4a45" d="M19.500 1h7v2.500h-7z"/>
              <path fill="#c07a40" d="M35 3h5v6c0 3 4 4 4 7v13c0 2-1 2-2 2h-9c-1 0-2 0-2-2V16c0-3 4-4 4-7z"/><path fill="#4d4a45" d="M34 1h7v2.500h-7z"/>
              <path fill="#d9c6a0" d="M0 32.500h47v1.500H0z"/>
              <text class="lg1" x="24" y="46" text-anchor="middle">SODA</text><text class="lg2" x="24" y="56" text-anchor="middle">FACTORY</text>
            </svg>
            <nav class="pages">
              <button>OVERVIEW</button><button>FACTORS</button><button class="on">OPERATOR</button><button>PRODUCTION</button><button>RECOMMENDATIONS</button>
            </nav>
          </aside>
          <div class="dash">
            <section class="dates">
              <button>Thursday, August 29, 2024</button><button>Friday, August 30, 2024</button><button>Saturday, August 31, 2024</button><button>Monday, September 02, 2024</button><button>Tuesday, September 03, 2024</button>
            </section>
            <section class="cards"><div class="cardset">
              <div><h3>Best Operator</h3><p>Dennis</p></div><div><h3>NO. Operators</h3><p>4</p></div><div><h3>AVG downtime|operator(min)</h3><p>347</p></div>
            </div></section>
            <section class="panel"><h3>Total Batch Duration | Operator</h3>
              <div class="bars one">
                <span>Charlie</span><div class="track"><i class="top" style="width:100%">1158</i></div>
                <span>Dee</span><div class="track"><i style="width:89%"></i><b>1030</b></div>
                <span>Mac</span><div class="track"><i style="width:73.400%"></i><b>850</b></div>
                <span>Dennis</span><div class="track"><i style="width:70.800%"></i><b>820</b></div>
              </div></section>
            <section class="panel picked"><h3>NO. Batches | Operator</h3>
              <div class="cols">
                <div><b>11</b><i class="top" style="height:74px"></i><span>Charlie</span></div>
                <div><b>11</b><i style="height:74px"></i><span>Dee</span></div>
                <div><i style="height:60px"></i><span>Dennis</span></div>
                <div><i style="height:54px"></i><span>Mac</span></div>
              </div>
              <dl class="tip"><dt>Operator</dt><dd>Dee</dd><dt>Count of Batch</dt><dd>11</dd></dl>
            </section>
            <section class="panel"><h3>Operator Error Time % | Operator</h3>
              <div class="cols">
                <div><b>59.38%</b><i class="top" style="height:96px"></i><span>Charlie</span></div>
                <div><b>57.83%</b><i style="height:93px"></i><span>Mac</span></div>
                <div><b>54.30%</b><i style="height:87px"></i><span>Dennis</span></div>
                <div><b>51.89%</b><i style="height:83px"></i><span>Dee</span></div>
              </div></section>
            <section class="panel"><h3>Error Freq | Operator</h3>
              <div class="bars two">
                <span>Mac</span><div class="track"><i class="top" style="width:100%"></i><b>53.8%</b></div>
                <span>Charlie</span><div class="track"><i style="width:98.300%"></i><b>52.9%</b></div>
                <span>Dee</span><div class="track"><i style="width:97.700%"></i><b>52.6%</b></div>
                <span>Dennis</span><div class="track"><i style="width:92.900%"></i><b>50.0%</b></div>
              </div></section>
          </div>
        </article>
      </div>
      <aside class="filters">
        <button aria-label="Expand filters"><svg class="flip" width="14" height="14"><use href="#i-right2"/></svg></button>
        <svg width="14" height="14" viewBox="0 0 14 14" fill="none" stroke="#3b3a39" stroke-width="1.300"><path d="M12.500 1v12L7 8.500H1.500v-3H7z"/></svg>
        <h2>Filters</h2>
      </aside>
    </div>
    <div class="tabs">
      <div class="views">
        <button class="on" aria-label="Desktop layout"><svg width="20" height="16" viewBox="0 0 20 16" fill="none" stroke="#484644" stroke-width="1.600"><path d="M1 1h18v11H1zM7 15h6M10 12v3"/></svg></button>
        <button aria-label="Mobile layout"><svg width="14" height="20" viewBox="0 0 14 20" fill="none" stroke="#605e5c" stroke-width="1.600"><rect x="1" y="1" width="12" height="18" rx="1"/><path d="M6 16.500h2"/></svg></button>
        <i class="tri l"></i><i class="tri r"></i>
      </div>
      <button class="t1">OVERVIEW</button><button class="t2">FACTORS</button><button class="t3 on">OPERATOR<span>x</span></button><button class="t4">PRODUCTION</button><button class="t5">RECOMMENDATIONS</button>
      <button class="t6"><svg width="14" height="12" viewBox="0 0 14 12" fill="none" stroke="#605e5c"><path d="M1 7c2-5 10-5 12 0M1 1l11 10M5 7c0-2 4-2 4 0s-3 2-4 0"/></svg>Products Downtime Details</button>
      <button class="plus" aria-label="New page"><svg width="12" height="12" viewBox="0 0 12 12" stroke="#fff" stroke-width="2"><path d="M6 0v12M0 6h12"/></svg></button>
    </div>
  </div>

  <section class="pane">
    <header><h2>Build</h2><svg width="18" height="18"><use href="#v-dots"/></svg><svg width="14" height="14"><use href="#i-right2"/></svg></header>
    <h3>Suggestions</h3>
    <div class="visuals">
      <button><svg><use href="#v-stackbar"/></svg></button><button><svg><use href="#v-stackcol"/></svg></button><button class="hint"><svg><use href="#v-clbar"/></svg></button><button class="hint"><svg><use href="#v-clcol"/></svg></button><button><svg><use href="#v-100bar"/></svg></button><button><svg><use href="#v-100col"/></svg></button>
      <button><svg><use href="#v-line"/></svg></button><button><svg><use href="#v-area"/></svg></button><button><svg><use href="#v-starea"/></svg></button><button><svg><use href="#v-fullarea"/></svg></button><button><svg><use href="#v-combo"/></svg></button><button><svg><use href="#v-combo2"/></svg></button>
      <button><svg><use href="#v-ribbon"/></svg></button><button><svg><use href="#v-waterfall"/></svg></button><button><svg><use href="#v-funnel"/></svg></button><button><svg><use href="#v-scatter"/></svg></button><button><svg><use href="#v-pie"/></svg></button><button><svg><use href="#v-donut2"/></svg></button>
      <button><svg><use href="#v-tree"/></svg></button><button><svg><use href="#v-globe"/></svg></button><button><svg><use href="#v-map"/></svg></button><button><svg><use href="#v-shape"/></svg></button><button><svg><use href="#v-arrow"/></svg></button><button><svg><use href="#v-gauge"/></svg></button>
      <button><svg><use href="#v-card"/></svg></button><button><svg><use href="#v-multirow"/></svg></button><button><svg><use href="#v-kpi"/></svg></button><button><svg><use href="#v-slicer"/></svg></button><button><svg><use href="#v-table"/></svg></button><button><svg><use href="#v-matrix"/></svg></button>
      <button class="lang">R</button><button class="lang">Py</button><button><svg><use href="#v-influ"/></svg></button><button><svg><use href="#v-decomp"/></svg></button><button><svg><use href="#v-qa"/></svg></button><button><svg><use href="#v-paper"/></svg></button>
      <button><svg><use href="#v-goal"/></svg></button><button><svg><use href="#v-paged"/></svg></button><button><svg><use href="#v-cardnew"/></svg></button><button><svg><use href="#v-slicernew"/></svg></button><button><svg><use href="#v-azure"/></svg></button><button><svg><use href="#v-apps"/></svg></button>
      <button><svg><use href="#v-flow"/></svg></button><button><svg><use href="#v-dots"/></svg></button>
    </div>
    <h3 class="dhead">Data</h3>
    <div class="well"><button>+Add data</button></div>
  </section>

  <section class="pane fields">
    <header><h2>Data</h2><svg width="18" height="18"><use href="#v-dots"/></svg><svg width="14" height="14"><use href="#i-right2"/></svg></header>
    <label class="find"><svg width="16" height="16"><use href="#i-search-r"/></svg><input type="text" placeholder="Search" aria-label="Search fields"></label>
    <ul>
      <li><svg class="ch"><use href="#i-right"/></svg><svg class="ti"><use href="#i-calc"/></svg>Factors Measures</li>
      <li><svg class="ch"><use href="#i-right"/></svg><svg class="ti"><use href="#i-calc"/></svg>operator measures</li>
      <li><svg class="ch"><use href="#i-right"/></svg><svg class="ti"><use href="#i-tblcalc"/></svg>production measures</li>
      <li><svg class="ch"><use href="#i-right"/></svg><svg class="ti"><use href="#i-tbl"/></svg>Date Dim</li>
      <li><svg class="ch"><use href="#i-right"/></svg><svg class="ti"><use href="#i-tbl"/></svg>Downtime factors</li>
      <li><svg class="ch"><use href="#i-right"/></svg><svg class="ti"><use href="#i-tbl"/></svg>Line downtime</li>
      <li><svg class="ch"><use href="#i-right"/></svg><svg class="ti"><use href="#i-tbl"/></svg>Line productivity</li>
      <li><svg class="ch"><use href="#i-right"/></svg><svg class="ti"><use href="#i-tbl"/></svg>Products</li>
    </ul>
  </section>

  <nav class="switch">
    <button class="on" aria-label="Data"><svg width="18" height="20" viewBox="0 0 18 20" fill="#fff" stroke="#3b3a39" stroke-width="1.200"><path d="M3 4v12c0 3 12 3 12 0V4"/><ellipse cx="9" cy="4" rx="6" ry="2.500"/></svg></button>
    <button class="on" aria-label="Build"><svg width="20" height="20" viewBox="0 0 20 20" fill="none" stroke="#3b3a39" stroke-width="1.200"><path d="M9 17H1V8h4M5 17V1h5v8M10 5h5"/><path fill="#f8e6d2" stroke="#d26900" d="M10 9v8c0 2 8 2 8 0V9c0-2-8-2-8 0 0 2 8 2 8 0"/></svg></button>
    <button aria-label="Format"><svg width="20" height="20" viewBox="0 0 20 20" fill="none" stroke="#3b3a39" stroke-width="1.200"><path d="M3 16H1V7h4v6M5 12V1h5v8M10 5h4v3"/><path fill="#fff" d="M18 5l-8 7 2 2 7-8z"/><path fill="#2b88d8" stroke="#0063b1" d="M10 12l2 3c-1 4-6 4-8 3 2-1 2-6 6-6z"/></svg></button>
    <button aria-label="Bookmarks"><svg width="20" height="20" viewBox="0 0 20 20" fill="none" stroke="#605e5c" stroke-width="1.200"><path d="M9 18H1V1h14v7M4 14V9h3v5M7 14V5h3v5"/><circle cx="14" cy="14" r="4" fill="#fff" stroke="#0078d4" stroke-width="1.400"/><path stroke="#0078d4" d="M14 11v3h2M12 8.500h4"/></svg></button>
    <button aria-label="Add pane"><svg width="18" height="18" viewBox="0 0 18 18" stroke="#000"><path d="M9.500 1v17M1 9.500h17"/></svg></button>
    <button class="gear" aria-label="Settings"><svg width="22" height="22" viewBox="0 0 22 22" fill="none" stroke="#3b3a39" stroke-width="1.500" stroke-linejoin="round"><path d="M9 2h4l.7 3 2 1 3-1 2 3.500-2.200 2.500 2.200 2.500-2 3.500-3-1-2 1-.7 3H9l-.7-3-2-1-3 1-2-3.500L3.500 11 1.300 8.500l2-3.500 3 1 2-1z"/><circle cx="11" cy="11" r="3"/></svg></button>
  </nav>
</main>

<footer class="status">
  <span>Page 3 of 6</span>
  <div class="zoom"><input type="range" value="50" aria-label="Zoom"><span>68%</span>
  <svg width="16" height="12" viewBox="0 0 16 12" fill="none" stroke="#605e5c"><path d="M.5 .5h15v11H.5z"/><path stroke="#8b4fa0" d="M3 4.500v-2h2M11 2.500h2v2M3 7.500v2h2M11 9.500h2v-2"/></svg></div>
</footer>

<div class="sharing" role="status"><i></i><span>teams.microsoft.com is sharing your screen.</span><button>Stop sharing</button><a href="#">Hide</a></div>

<footer class="taskbar">
  <button class="start" aria-label="Start"><svg width="24" height="24" viewBox="0 0 24 24" fill="url(#win)"><path d="M0 0h11.500v11.500H0zM12.500 0H24v11.500H12.500zM0 12.500h11.500V24H0zM12.500 12.500H24V24H12.500z"/></svg></button>
  <label class="tsearch"><svg width="18" height="18"><use href="#i-search-r"/></svg><input type="text" placeholder="Search" aria-label="Search Windows">
    <svg width="46" height="24" viewBox="0 0 46 24"><path fill="#f2b877" d="M7 3c2-2 7-2 9 0zM17 5c2-3 8-3 11 0z"/><path fill="#d59c7b" d="M27 8l4-7 5 7v5h-9z"/><path fill="#4c8a5a" d="M25 10h13l4 5H24z"/><path fill="#d9784a" d="M35 9l4-3 5 6v4h-9z"/><path fill="#39919a" d="M3 16h40l-3 5c-10 3-28 3-34 0z"/><path fill="none" stroke="#d9a35b" stroke-width="1.500" d="M1 15h34M12 12v8M21 12v8"/><path stroke="#6d8a9a" d="M7 5v9M16 6v8M3 7h8M13 8h7"/><path fill="#e9b56a" d="M38 15h7l-4 4h-7z"/></svg></label>
  <div class="apps">
    <button aria-label="Task view"><svg width="24" height="24" viewBox="0 0 24 24"><path fill="#f4f4f4" d="M7 2h17v15H7z"/><path fill="#6d7070" fill-opacity=".9" d="M0 7h17v16H0z"/></svg></button>
    <button aria-label="Copilot"><svg width="24" height="24"><use href="#i-copilot"/></svg></button>
    <button class="run" aria-label="Files"><svg width="26" height="24" viewBox="0 0 26 24"><path fill="#d99a14" d="M1 3c0-1 0-2 1-2h7l3 3h12v6H1z"/><path fill="#fbcf4e" d="M1 6h24v15c0 1 0 2-1 2H2c-1 0-1-1-1-2z"/><path fill="#1675cc" d="M6 23v-5c0-2 1-3 3-3h8c2 0 3 1 3 3v5z"/></svg></button>
    <button class="run" aria-label="Store"><svg width="24" height="24" viewBox="0 0 24 24"><path fill="none" stroke="#3ab0ea" stroke-width="2" d="M7 6V3c0-1 0-2 2-2h6c2 0 2 1 2 2v3"/><path fill="#f0f0f0" d="M1 5h22v16c0 2-1 3-3 3H4c-2 0-3-1-3-3z"/><path fill="#f25022" d="M7 9h4.500v4.500H7z"/><path fill="#7fba00" d="M12.500 9H17v4.500h-4.500z"/><path fill="#00a4ef" d="M7 14.500h4.500V19H7z"/><path fill="#ffb900" d="M12.500 14.500H17V19h-4.500z"/></svg></button>
    <button aria-label="Firefox"><svg width="24" height="24" viewBox="0 0 24 24"><path fill="url(#fox)" d="M3 4l2 3c1-1 3-2 4-2l2-1c2-1 2-3 4-4 1 4 8 6 8 13C23 20 18 24 12 24S0 19 0 13c0-4 2-5 3-9z"/><circle cx="12" cy="13" r="5.500" fill="#7a3fd0"/><path fill="#ff9a2a" d="M5 9c3-2 6 0 8 1-1 2-4 2-3 4 2 3 6 1 8-2 0 6-4 9-8 8-5-1-7-6-5-11z"/></svg></button>
    <button aria-label="Teams"><svg width="24" height="24"><use href="#i-teams"/></svg></button>
    <button class="run" aria-label="Edge profile"><svg width="24" height="24"><use href="#i-edge"/></svg><svg class="pers" width="12" height="12" viewBox="0 0 12 12"><circle cx="6" cy="6" r="6" fill="#c8c6c4"/><circle cx="6" cy="4.500" r="2" fill="#605e5c"/><path fill="#605e5c" d="M2.500 9.500c0-4 7-4 7 0-2 2-5 2-7 0z"/></svg></button>
    <button class="run" aria-label="Visual Studio Code"><svg width="24" height="24" viewBox="0 0 24 24"><path fill="none" stroke="#0c7ac8" stroke-width="3.500" stroke-linecap="round" d="M19 3L2 16M2 8l17 13"/><path fill="#1f9cf0" d="M18 0l6 3v18l-6 3z"/></svg></button>
    <button class="run" aria-label="Word"><svg width="26" height="24" viewBox="0 0 26 24"><path fill="#41a5ee" d="M7 1h18v6H7z"/><path fill="#2b7cd3" d="M7 7h18v5H7z"/><path fill="#185abd" d="M7 12h18v6H7z"/><path fill="#103f91" d="M7 18h18v5H7z"/><path fill="#185abd" d="M0 6h13v12H0z"/><path fill="none" stroke="#fff" stroke-width="1.500" d="M2.500 8.500L4.500 15l2-6 2 6 2-6.500"/></svg></button>
    <button class="run" aria-label="Teams, 1 notification"><svg width="24" height="24"><use href="#i-teams"/></svg><em>1</em></button>
    <button class="run" aria-label="Teams chat"><svg width="24" height="24"><use href="#i-teams"/></svg></button>
    <button class="run" aria-label="Edge"><svg width="24" height="24"><use href="#i-edge"/></svg></button>
    <button class="run front" aria-label="Power BI"><svg width="20" height="24" viewBox="0 0 20 24"><path fill="#d8981a" d="M10 0h10v24H10z"/><path fill="#f0bd2e" d="M5 6h10v18H5z"/><path fill="url(#gold)" d="M0 12h10v12H0z"/></svg></button>
  </div>
  <div class="tray">
    <button class="note" aria-label="1 notification"><svg width="24" height="24" viewBox="0 0 24 24"><path fill="#9c2a12" d="M0 8l3-3 5 6-3 3z"/><path fill="#e04e10" d="M4 12l9-8 3 3-9 8z"/><path fill="#e8500e" d="M12 13l6-4 5 2v8H12z"/></svg><em>1</em></button>
    <button aria-label="Show hidden icons"><svg width="12" height="8" viewBox="0 0 12 8"><path fill="none" stroke="#fff" stroke-width="1.500" d="M1 6.500l5-5 5 5"/></svg></button>
    <button aria-label="Sync"><svg width="18" height="16" viewBox="0 0 18 16"><path fill="#b9bcbc" d="M1 10c-1-3 2-4 3-4 1-5 9-5 9 0 2 0 3 2 2 5z"/><circle cx="12.500" cy="11" r="4.500" fill="#d92a35"/><path stroke="#fff" stroke-width="1.300" d="M10.500 9l4 4M14.500 9l-4 4"/></svg></button>
    <button aria-label="Microphone"><svg width="14" height="18" viewBox="0 0 14 18" fill="none" stroke="#d8dcdc" stroke-width="1.200"><rect x="4.500" y="1" width="5" height="10" rx="2.500"/><path d="M1.500 8c0 7 11 7 11 0M7 13.500V17"/></svg></button>
    <button class="eng">ENG</button>
    <button class="net" aria-label="Network, volume and battery"><svg width="18" height="16" viewBox="0 0 18 16" fill="none" stroke="#fff" stroke-width="1.400"><path d="M1 6c5-5 11-5 16 0M3.500 9c3-4 8-4 11 0M6 11.500c2-2 4-2 6 0"/><circle cx="9" cy="13.500" r="1"/></svg><svg width="18" height="16" viewBox="0 0 18 16" fill="none" stroke="#fff" stroke-width="1.200"><path d="M1.500 6h2L7 2.500v11L3.500 10h-2zM9 6c1 1 1 3 0 4M11 4c2 2 2 6 0 8"/><path stroke="#7f8c8c" d="M13.500 2.500c3 3 3 8 0 11"/></svg><svg width="18" height="16" viewBox="0 0 18 16"><path fill="#fff" d="M4 6h9v6H4z"/><path fill="none" stroke="#fff" d="M5 3.500h8.500c1 0 1.500.5 1.500 1.500v7c0 1-.5 1.500-1.500 1.500h-10C2.500 13.500 2 13 2 12V9M16.500 6.500v4"/><path fill="#fff" d="M4 0L0 5h2L1 9l5-5H4z"/></svg></button>
    <button class="clock">6:59 PM<br>5/18/2025</button>
  </div>
</footer>
</body>
</html>
```
FILE: styles.css
```css
* { box-sizing: border-box; }
body { margin: 0; height: 100vh; display: flex; flex-direction: column; overflow: hidden; font: 12px/16px "Segoe UI", "Open Sans", sans-serif; color: #252423; background: #fafafa; }
button { font: inherit; color: inherit; background: none; border: 0; padding: 0; margin: 0; display: flex; align-items: center; justify-content: center; }
h2, h3, p, ul, dl, dd { margin: 0; padding: 0; font-size: inherit; font-weight: 400; }
input { font: inherit; color: inherit; border: 0; background: none; outline: 0; min-width: 0; padding: 0; flex: 1; }
svg { flex: none; }
em { font-style: normal; }
.sprite { position: absolute; width: 0; height: 0; }
.k { fill: none; stroke: #3b3a39; }
.k[fill] { fill: #fff; }
.b { fill: #83beec; stroke: #0063b1; }
.b[fill] { fill: #fff; }
.g { fill: #c8c6c4; stroke: #797775; }
.dn { width: 8px; height: 8px; }

/* Title bar */
.titlebar { height: 34px; flex: none; background: #3b3a39; color: #fff; display: grid; grid-template-columns: 102px 515px 400px 1fr; align-items: center; }
.quick { display: flex; gap: 14px; padding-left: 17px; }
.doc { justify-content: flex-start; gap: 6px; padding-top: 5px; }
.caret { border: 5px solid transparent; border-top-color: #fff; border-bottom: 0; }
.topsearch { height: 24px; background: #d2d0ce; color: #3b3a39; display: flex; align-items: center; gap: 10px; padding-left: 17px; font-size: 13px; border-radius: 2px; }
.topsearch input::placeholder, .find input::placeholder { color: #605e5c; }
.account { display: flex; align-items: center; justify-content: flex-end; padding-right: 16px; }
.avatar { margin: 0 31px 0 8px; }
.account button + button { margin-left: 32px; }

/* Menu and ribbon */
.menu { height: 32px; flex: none; display: grid; grid-template-columns: 66px 68px 68px 89px 62px 86px 62px 1fr; font-size: 13px; }
.menu .on { font-weight: 700; position: relative; }
.menu .on::after { content: ""; position: absolute; left: 15px; right: 15px; bottom: 1px; height: 3px; background: #117865; }
.menu .share { justify-self: end; align-self: center; margin-right: 6px; background: #117865; color: #fff; height: 24px; width: 84px; gap: 5px; border-radius: 3px; font-size: 12px; }
.ribbon { height: 94px; flex: none; display: flex; padding: 4px 0 1px; position: relative; z-index: 2; box-shadow: 0 1px 4px rgba(0,0,0,.2); background: #fafafa; }
.group { display: flex; flex-direction: column; border-right: 1px solid #d2d0ce; }
.group h2 { text-align: center; font-size: 10px; line-height: 12px; margin-top: auto; }
.tools { display: flex; padding-top: 5px; height: 76px; }
.big { flex-direction: column; justify-content: flex-start; line-height: 16px; white-space: nowrap; flex: none; }
.big > svg { height: 32px; margin-bottom: 3px; }
.off { color: #bebbb8; }
.stack { display: grid; grid-template-rows: repeat(3, 24px); flex: none; margin-top: -4px; }
.stack button { justify-content: flex-start; gap: 4px; white-space: nowrap; height: 24px; }
.clip { width: 81px; } .clip .big { width: 58px; } .clip .stack { width: 23px; margin-left: -6px; }
.data { width: 300px; } .data .big { width: 53px; padding-left: 3px; } .data .stack { width: 126px; }
.data .stack button { gap: 3px; }
.quer { width: 116px; padding-left: 7px; } .quer .big { width: 58px; } .quer .big + .big { width: 46px; padding-left: 2px; }
.ins { width: 411px; } .ins .big { width: 50px; } .ins .big:first-child { width: 53px; padding-left: 6px; } .ins .big:last-child { width: 42px; }
.calc { width: 188px; } .calc .big { width: 49px; } .calc .big:first-child { width: 82px; }
.sens { width: 75px; } .sens .big { width: 74px; }
.pub { width: 59px; } .pub .big { width: 58px; }
.gallery { display: flex; width: 254px; height: 62px; border: 1px solid #8a8886; background: #fff; margin-top: 2px; }
.cells { flex: 1; display: grid; grid-template-columns: repeat(9, 26px); grid-auto-rows: 29px; padding: 1px; }
.cells svg { width: 18px; height: 18px; }
.drop { width: 16px; border-left: 1px solid #8a8886; }
.fold { margin-left: auto; align-self: flex-end; padding: 0 4px 4px 0; }

/* Work area */
.work { flex: 1; min-height: 0; display: grid; grid-template-columns: 41px minmax(0, 1fr) 181px 181px 33px; }
.rail { background: #f3f2f1; border-right: 1px solid #e1dfdd; display: flex; flex-direction: column; }
.rail button { height: 40px; }
.rail .on { border-left: 3px solid #117865; padding-right: 2px; }
.center { display: flex; flex-direction: column; min-width: 0; }
.stage { flex: 1; min-height: 0; display: flex; background: #fff; }
.canvas { flex: 1; min-width: 0; padding: 0 9px 6px; }
.page { height: 100%; border: 2px dotted #605e5c; border-top: 0; display: flex; gap: 20px; padding: 12px 14px 0 9px; font-family: "Comic Sans MS", "Comic Neue", "Open Sans", sans-serif; }
.side { width: 102px; flex: none; }
.logo { display: block; margin: 0 0 33px 7px; }
.lg1, .lg2 { font-family: Lato, sans-serif; font-weight: 900; fill: #d9c6a0; }
.lg1 { font-size: 15px; } .lg2 { font-size: 10px; }
.pages { height: 340px; display: flex; flex-direction: column; justify-content: space-between; }
.pages button { height: 58px; border: 2px solid #5c7141; border-radius: 22px; background: #f5f2e5; font-size: 11px; font-style: italic; font-weight: 500; white-space: nowrap; color: #252423; }
.pages .on { background: #252423; color: #fff; font-family: "Segoe UI", "Open Sans", sans-serif; font-size: 10px; font-weight: 700; }
.dash { flex: 1; min-width: 0; margin-top: 4px; display: grid; grid-template-columns: 1fr 1fr; grid-template-rows: 62px 70px 149px 169px; gap: 6px 4px; align-content: start; }
.dates { grid-column: 1 / 3; display: grid; grid-template-columns: repeat(5, 1fr); gap: 1px; border: 3px solid #5c7141; border-radius: 5px; background: #f5f2e5; padding: 5px 18px 6px 19px; }
.dates button { background: #5c7141; font-size: 10px; line-height: 12px; font-style: italic; font-weight: 600; color: #000; border: 1px solid #9aa585; padding: 0 7px; }
.cards { grid-column: 1 / 3; background: #5c7141; padding: 3px 6px 5px 4px; }
.cardset { height: 100%; display: grid; grid-template-columns: repeat(3, 1fr); background: #f5f2e5; border: 1px solid #a5ad90; border-radius: 15px; text-align: center; }
.cardset div + div { border-left: 1px solid #dcdacb; }
.cardset h3 { font-size: 10px; line-height: 14px; padding-top: 4px; font-style: italic; font-weight: 700; color: #000; }
.cardset p { font-size: 27px; line-height: 34px; padding-top: 6px; font-weight: 600; color: #252a35; }
.panel { position: relative; border: 3px solid #5c7141; border-radius: 5px; background: #f5f2e5; display: flex; flex-direction: column; font-size: 9px; min-width: 0; font-weight: 600; }
.panel h3 { font-size: 16px; line-height: 22px; font-style: italic; font-weight: 700; text-align: center; color: #000; padding: 2px 0 0 6px; flex: none; }
.picked { outline: 1px solid #8a8886; outline-offset: -1px; }
.bars { display: grid; grid-template-columns: 34px 1fr; column-gap: 6px; align-items: center; text-align: right; }
.one { grid-auto-rows: 19px; row-gap: 5px; padding: 14px 29px 0 0; }
.two { grid-auto-rows: 21px; row-gap: 7px; padding: 18px 36px 0 0; }
.track { height: 100%; display: flex; align-items: center; }
.track i { height: 100%; flex: none; }
.bars i, .cols i { background: #9aab5b; border: 1px solid #7a8460; font-style: normal; }
.bars .top, .cols .top { background: #5c7141; border-color: #6f7f58; padding-right: 5px; }
.panel b { font-weight: 600; }
.track b { padding-left: 5px; }
.cols { margin-top: auto; display: flex; justify-content: space-between; align-items: flex-end; padding: 0 38px 6px 35px; }
.cols div { width: 58px; display: flex; flex-direction: column; text-align: center; line-height: 16px; }
.cols b { line-height: 18px; }
.tip { position: absolute; left: 144px; top: 36px; width: 156px; height: 70px; background: #fff; box-shadow: 0 2px 8px rgba(0,0,0,.25); display: grid; grid-template-columns: 88px 1fr; column-gap: 12px; padding: 17px 0 0 15px; align-content: start; font: 13px/19px "Segoe UI", "Open Sans", sans-serif; color: #484644; white-space: nowrap; }
.tip::before { content: ""; position: absolute; left: -7px; top: 49px; border: 7px solid transparent; border-right-color: #fff; border-left: 0; }
.tip dt { text-align: right; justify-self: end; }
.filters { width: 33px; border-left: 1px solid #c8c6c4; display: flex; flex-direction: column; align-items: center; gap: 14px; padding-top: 12px; }
.flip { transform: scaleX(-1); }
.filters h2 { writing-mode: vertical-rl; font-size: 14px; line-height: 18px; font-weight: 600; margin-top: -6px; }

/* Page tabs */
.tabs { height: 35px; display: flex; background: #f3f2f1; }
.tabs > button { background: #fff; border-left: 1px solid #c8c6c4; padding-top: 2px; }
.views { width: 127px; display: flex; align-items: center; padding-left: 10px; }
.views button { height: 30px; }
.views .on { border-bottom: 3px solid #117865; padding: 0 2px 3px; margin-right: 25px; }
.views button + button { padding-bottom: 6px; }
.tri { border: 4px solid transparent; margin-left: 20px; }
.tri.r { border-left: 5px solid #c8c6c4; border-right: 0; margin-left: 17px; }
.tri.l { border-right: 5px solid #c8c6c4; border-left: 0; }
.t1 { width: 98px; } .t2 { width: 90px; } .t3 { width: 101px; } .t4 { width: 115px; } .t5 { width: 156px; } .t6 { width: 184px; gap: 3px; white-space: nowrap; }
.tabs .on.t3 { font-weight: 600; border-bottom: 4px solid #117865; padding-top: 6px; position: relative; }
.t3 span { position: absolute; right: 4px; top: 1px; font-size: 11px; }
.tabs .plus { width: 40px; background: #117865; }

/* Panes */
.pane { background: #f3f2f1; border-left: 1px solid #e1dfdd; padding: 0 9px 0 8px; }
.pane header { height: 38px; display: flex; align-items: center; gap: 7px; }
.pane header h2 { font-size: 15px; font-weight: 600; margin-right: auto; }
.pane h3 { line-height: 16px; }
.visuals { margin: 3px 0 10px; border: 1px solid #8a8886; border-radius: 2px; background: #fff; height: 213px; display: grid; grid-template-columns: repeat(6, 26px); grid-auto-rows: 26px; padding: 2px 3px; }
.visuals svg { width: 18px; height: 18px; }
.hint svg { background: #e1dfdd; }
.lang { font-size: 17px; font-weight: 700; color: #2b82c0; }
.dhead { margin-bottom: 3px; }
.well { border: 1px dashed #605e5c; padding: 4px; height: 40px; }
.well button { width: 100%; height: 30px; border: 1px solid #605e5c; border-radius: 2px; background: #fff; font-weight: 600; }
.fields { padding: 0 4px; }
.fields header { padding: 0 4px; }
.find { display: flex; align-items: center; gap: 5px; height: 24px; margin: 7px 0 10px; padding-left: 12px; border: 1px solid #c8c6c4; border-bottom-color: #605e5c; border-radius: 4px; background: #fff; font-size: 13px; color: #605e5c; }
.fields ul { list-style: none; }
.fields li { height: 24px; display: flex; align-items: center; padding-left: 8px; color: #3b3a39; white-space: nowrap; }
.ch { width: 14px; height: 14px; color: #605e5c; }
.ti { width: 16px; height: 16px; margin: 0 3px 0 2px; }
.switch { background: #faf9f8; border-left: 1px solid #e1dfdd; display: flex; flex-direction: column; }
.switch button { height: 32px; }
.switch .on { background: #e1dfdd; border: 1px solid #605e5c; }
.switch .gear { margin-top: auto; border-top: 1px solid #e1dfdd; }

/* Status bar and sharing bar */
.status { height: 24px; flex: none; background: #f3f2f1; border-top: 1px solid #d2d0ce; display: flex; align-items: center; justify-content: space-between; padding: 2px 18px 0 4px; color: #484644; }
.zoom { display: flex; align-items: center; gap: 18px; }
.zoom input { width: 100px; flex: none; height: 2px; appearance: none; background: #8a8886; overflow: hidden; }
.zoom input + span { margin-left: 4px; }
.sharing { position: absolute; z-index: 5; right: 75px; bottom: 52px; width: 420px; height: 44px; display: flex; align-items: center; background: rgba(74,74,74,.96); border: 1px solid #6a6a6a; box-shadow: 0 2px 8px rgba(0,0,0,.4); color: #fff; padding-left: 10px; white-space: nowrap; }
.sharing i { width: 6px; height: 11px; border: 2px solid #d2d0ce; border-width: 0 2px; }
.sharing span { margin-left: 10px; width: 241px; font-size: 11px; }
.sharing button { background: #0a72c4; height: 32px; width: 101px; border-radius: 3px; font-weight: 600; }
.sharing a { color: #8ab8ec; margin-left: 12px; }

/* Taskbar */
.taskbar { height: 49px; flex: none; border-top: 1px solid #000; display: flex; align-items: center; color: #fff; background: linear-gradient(90deg, #15282e 0, #1b3028 10%, #182d2b 22%, #262827 33%, #272727 68%, #17302d 77%, #152b29 100%); }
.start { width: 57px; padding-left: 7px; }
.tsearch { width: 220px; height: 32px; border-radius: 16px; background: #384845; border: 1px solid #4c5a56; display: flex; align-items: center; gap: 9px; padding: 0 5px 0 10px; font-size: 13px; color: #e8ecec; }
.tsearch input::placeholder { color: #c8cfcd; }
.apps { display: flex; margin-left: 4px; gap: 4px; }
.apps button { width: 40px; height: 40px; position: relative; border-radius: 4px; }
.run::after { content: ""; position: absolute; bottom: 0; left: 17px; width: 6px; height: 3px; border-radius: 2px; background: #9b9b9b; }
.front { background: #353535; border: 1px solid #424242; }
.front::after { left: 11px; width: 16px; }
.pers { position: absolute; left: 8px; bottom: 7px; }
.apps em { position: absolute; right: 3px; top: 2px; width: 16px; height: 16px; border-radius: 8px; background: #c42b1c; font-size: 11px; }
.tray { margin-left: auto; display: flex; align-items: center; padding-right: 19px; }
.tray > button { height: 40px; width: 32px; }
.tray .note { width: 44px; margin-right: 12px; position: relative; }
.note em { position: absolute; right: 7px; top: 3px; width: 16px; height: 16px; border-radius: 8px; background: #ff9aa2; color: #252423; font-size: 11px; }
.tray .eng { width: 44px; }
.tray .net { width: 78px; gap: 6px; }
.tray .clock { width: 66px; justify-content: flex-end; text-align: right; }
```
